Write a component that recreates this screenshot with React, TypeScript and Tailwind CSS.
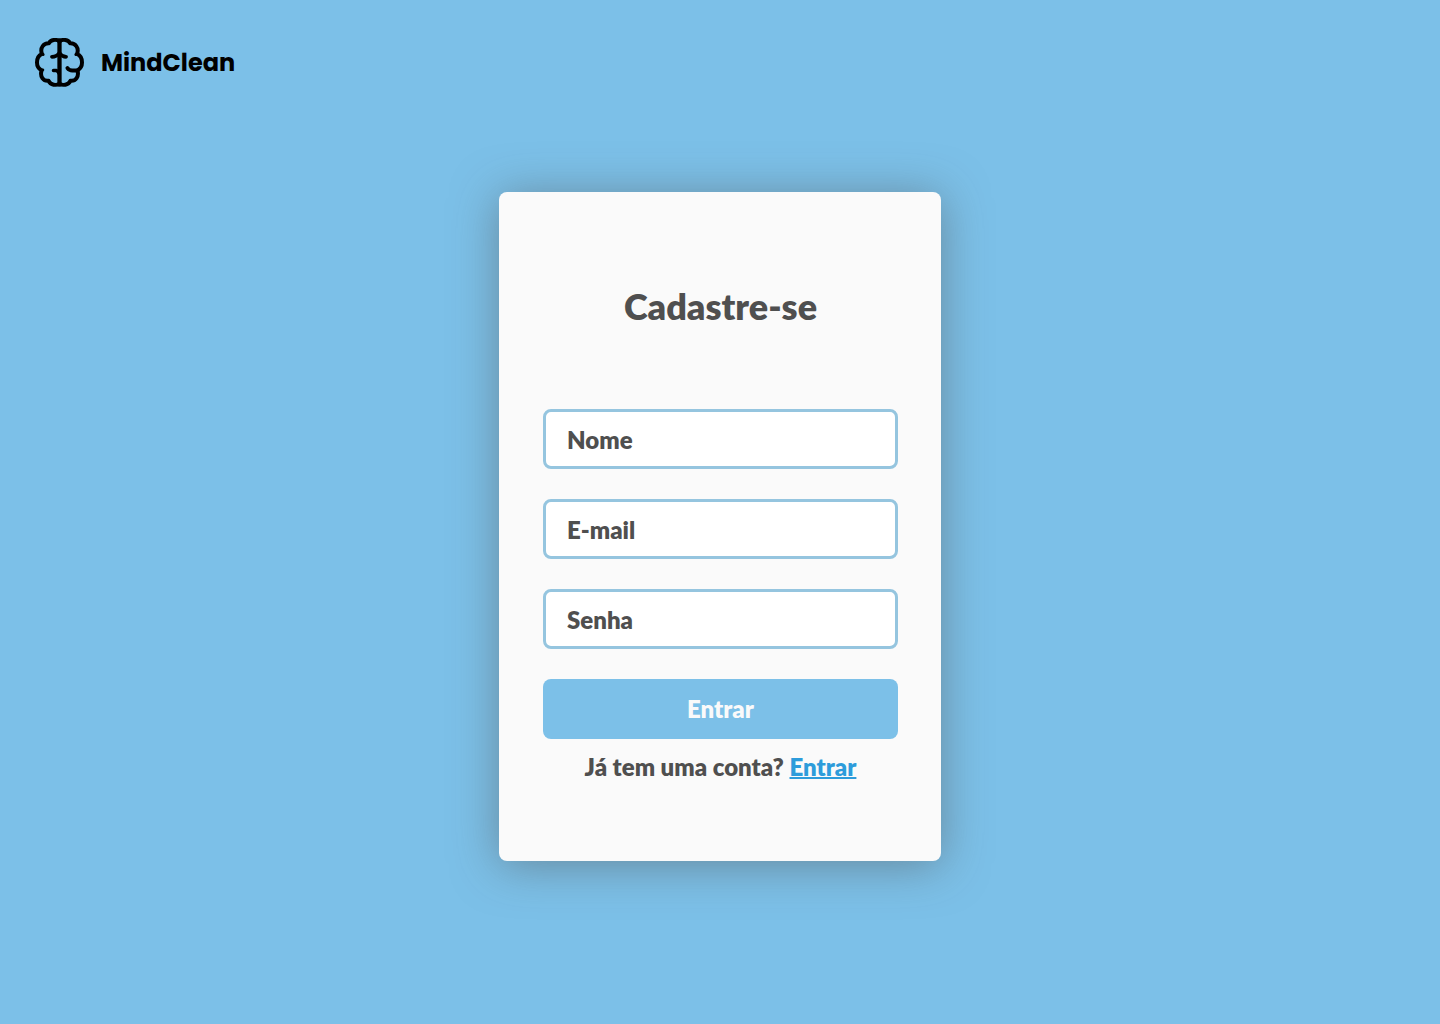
function BrainLogo() {
  return (
    <svg
      className="size-[49px] shrink-0"
      viewBox="33 29 148 148"
      fill="none"
      stroke="#000"
      strokeWidth="12"
      strokeLinecap="round"
      strokeLinejoin="round"
      aria-hidden="true"
    >
      <path d="M107 36V170" strokeWidth="13" />
      <path d="M107 39C98 32 80 33 75 45C60 44 47 58 54 77C43 82 39 91 39 103C39 114 44 122 53 127C47 145 58 160 74 158C80 172 98 173 107 167" />
      <path d="M107 39C116 32 134 33 139 45C154 44 167 58 160 77C171 82 175 91 175 103C175 114 170 122 161 127C167 145 156 160 140 158C134 172 116 173 107 167" />
      <path d="M54 77L58 79M53 127L57 125M160 77L156 79" strokeWidth="8" />
      <path d="M84 86Q98 86 107 74Q115 86 127 86" strokeWidth="11" />
      <path d="M89 127H97Q102 128 106 136" strokeWidth="11" />
      <path d="M131 120Q137 128 148 127H162" />
    </svg>
  );
}

type FieldProps = { id: string; label: string; type: string };

function Field({ id, label, type }: FieldProps) {
  return (
    <input
      id={id}
      type={type}
      aria-label={label}
      placeholder={label}
      className="block h-[60px] w-full rounded-lg border-3 border-[#95c5df] bg-white px-[21px] text-2xl font-extrabold text-[#4f4f4f] outline-none placeholder:text-[#4f4f4f] placeholder:opacity-100"
    />
  );
}

export default function App() {
  return (
    <div className="min-h-screen bg-[#7cc0e8] font-['Lato',sans-serif] text-[#4f4f4f]">
      <header className="flex items-center gap-[17px] px-[35px] pt-[38px]">
        <BrainLogo />
        <span className="font-['Poppins','Inter',sans-serif] text-2xl font-bold text-black">MindClean</span>
      </header>
      <main className="flex justify-center px-4 pt-[105px] pb-16">
        <section className="w-full max-w-[442px] rounded-lg bg-[#fafafa] pr-[43px] pl-11 pt-[90px] pb-[78px] shadow-[0_4px_46px_rgba(79,79,79,0.5)]">
          <h1 className="text-center text-4xl leading-[48px] font-extrabold">Cadastre-se</h1>
          <form className="mt-[79px] flex flex-col gap-[30px]" onSubmit={(e) => e.preventDefault()}>
            <Field id="nome" label="Nome" type="text" />
            <Field id="email" label="E-mail" type="email" />
            <Field id="senha" label="Senha" type="password" />
            <button type="submit" className="h-[60px] rounded-lg bg-[#7cc0e8] text-2xl font-extrabold text-[#fafafa]">
              Entrar
            </button>
          </form>
          <p className="mt-3 text-center text-2xl font-extrabold">
            Já tem uma conta?{" "}
            <a href="#entrar" className="text-[#2d9cdb] underline decoration-2">
              Entrar
            </a>
          </p>
        </section>
      </main>
    </div>
  );
}
